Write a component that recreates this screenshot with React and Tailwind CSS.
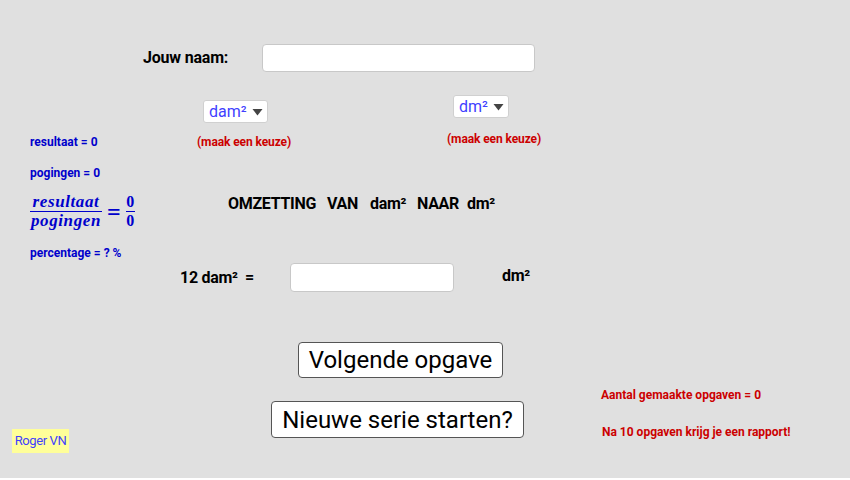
import React from "react";

const Caret = () => (
  <svg width="11" height="8" viewBox="0 0 11 8" className="ml-[5px]">
    <path d="M0.5 1 L10.5 1 L5.5 7.5 Z" fill="#444" />
  </svg>
);

const Stat = ({ className = "", children }) => (
  <div className={"h-[14px] leading-[14px] text-[12px] font-bold text-[#0000cc] whitespace-nowrap " + className}>
    {children}
  </div>
);

const Red = ({ className = "", children }) => (
  <div className={"h-[14px] leading-[14px] text-[12px] font-bold text-[#cc0000] whitespace-nowrap " + className}>
    {children}
  </div>
);

const Dropdown = ({ label, w }) => (
  <div
    className="h-[23px] bg-white border border-[#d0d0d0] rounded-[3px] flex items-center pl-[5px] text-[16px] text-[#3f3fff]"
    style={{ width: w }}
  >
    {label}
    <Caret />
  </div>
);

export default function App() {
  return (
    <div className="w-[850px] h-[480px] bg-white" style={{ fontFamily: "Roboto, 'Noto Sans', sans-serif" }}>
      <div className="flex w-[850px] h-[478px] bg-[#e0e0e0] overflow-hidden">
        {/* left column */}
        <div className="w-[143px] shrink-0 flex flex-col pl-[12px]">
          <Stat className="mt-[135px] ml-[18px]">resultaat = 0</Stat>
          <Stat className="mt-[17px] ml-[18px]">pogingen = 0</Stat>
          <div
            className="mt-[13px] ml-[18px] flex items-center text-[#0000cc]"
            style={{ fontFamily: "'Liberation Serif', 'DejaVu Serif', serif" }}
          >
            <div className="flex flex-col items-center">
              <div className="text-[17px] leading-[17px] italic font-bold tracking-[0.6px]">resultaat</div>
              <div className="w-[72px] h-[1px] mt-[1px] bg-[#0000cc]" />
              <div className="text-[17px] leading-[18px] italic font-bold tracking-[0.6px]">pogingen</div>
            </div>
            <div className="mx-[5px] text-[24px] font-bold leading-none">=</div>
            <div className="flex flex-col items-center">
              <div className="text-[16px] leading-[17px] font-bold">0</div>
              <div className="w-[9px] h-[1px] mt-[1px] bg-[#0000cc]" />
              <div className="text-[16px] leading-[18px] font-bold">0</div>
            </div>
          </div>
          <Stat className="mt-[16px] ml-[18px]">percentage = ? %</Stat>
          <div className="mt-auto mb-[25px] w-[57px] h-[24px] bg-[#ffff99] flex items-center justify-center text-[13px] text-[#3f3fff] tracking-[-0.4px]">
            Roger VN
          </div>
        </div>

        {/* center column */}
        <div className="w-[420px] shrink-0 flex flex-col">
          <div className="mt-[44px] h-[28px] flex items-center">
            <div className="w-[119px] text-[16px] font-bold text-black tracking-[-0.2px]">Jouw naam:</div>
            <div className="w-[273px] h-[28px] bg-white border border-[#c8c8c8] rounded-[4px]" />
          </div>

          <div className="flex items-start">
            <div className="ml-[54px] w-[250px] flex flex-col">
              <div className="mt-[28px] ml-[6px]">
                <Dropdown label="dam²" w={65} />
              </div>
              <Red className="mt-[12px] tracking-[-0.1px]">(maak een keuze)</Red>
            </div>
            <div className="flex flex-col">
              <div className="mt-[23px] ml-[6px]">
                <Dropdown label="dm²" w={56} />
              </div>
              <Red className="mt-[14px] tracking-[-0.1px]">(maak een keuze)</Red>
            </div>
          </div>

          <div className="mt-[45px] ml-[85px] h-[20px] flex items-center text-[16px] font-bold text-black tracking-[-0.3px] whitespace-nowrap">
            <span className="w-[99px]">OMZETTING</span>
            <span className="w-[43px]">VAN</span>
            <span className="w-[47px]">dam²</span>
            <span className="w-[50px]">NAAR</span>
            <span>dm²</span>
          </div>

          <div className="mt-[49px] ml-[37px] h-[29px] flex items-center">
            <div className="w-[110px] text-[16px] font-bold text-black tracking-[-0.3px] whitespace-nowrap">
              12 dam²&nbsp; =
            </div>
            <div className="w-[164px] h-[29px] bg-white border border-[#c8c8c8] rounded-[4px]" />
            <div className="ml-[48px] pb-[3px] text-[16px] font-bold text-black tracking-[-0.3px]">dm²</div>
          </div>

          <div className="mt-[50px] ml-[155px] w-[205px] h-[36px] bg-white border border-[#555] rounded-[4px] flex items-center justify-center text-[24px] text-black">
            Volgende opgave
          </div>
          <div className="mt-[23px] ml-[128px] w-[253px] h-[37px] bg-white border border-[#555] rounded-[4px] flex items-center justify-center text-[24px] text-black">
            Nieuwe serie starten?
          </div>
        </div>

        {/* right column */}
        <div className="ml-[38px] flex flex-col">
          <Red className="mt-[388px]">Aantal gemaakte opgaven = 0</Red>
          <Red className="mt-[23px] ml-[1px]">Na 10 opgaven krijg je een rapport!</Red>
        </div>
      </div>
    </div>
  );
}
